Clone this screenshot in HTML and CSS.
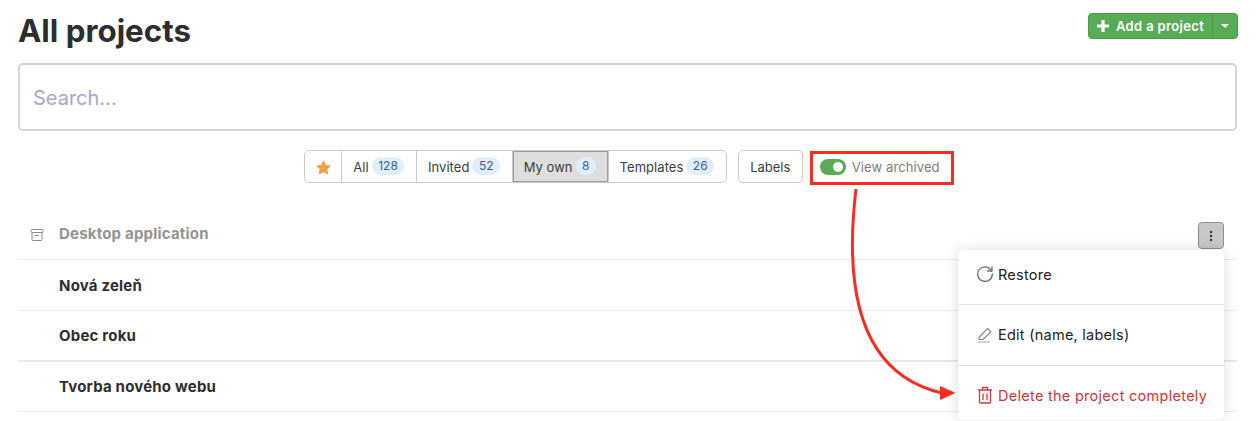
FILE: index.html
```html
<!DOCTYPE html>
<html lang="en">
<head>
<meta charset="utf-8">
<title>All projects</title>
<link rel="stylesheet" href="styles.css">
</head>
<body>
<main class="page">
  <header class="head">
    <h1 class="title">All projects</h1>
    <div class="add">
      <button class="add-main"><svg class="plus" viewBox="0 0 12 12" width="12" height="12"><path d="M4.400 0h3.200v4.400H12v3.200H7.600V12H4.400V7.600H0V4.400h4.400z" fill="#fff"/></svg>Add a project</button>
      <button class="add-caret"><span class="caret"></span></button>
    </div>
  </header>
  <div class="search">Search...</div>
  <nav class="filters">
    <div class="group">
      <button class="seg star"><svg viewBox="0 0 16 16" width="15" height="15"><path d="M8 1l2.200 4.600 5 .7-3.600 3.500.9 5L8 12.400l-4.500 2.400.9-5L.8 6.300l5-.7z" fill="#f0a044" stroke="#f0a044" stroke-linejoin="round"/></svg></button>
      <button class="seg">All <span class="badge">128</span></button>
      <button class="seg">Invited <span class="badge">52</span></button>
      <button class="seg active">My own <span class="badge">8</span></button>
      <button class="seg">Templates <span class="badge">26</span></button>
    </div>
    <button class="labels">Labels</button>
    <div class="toggle-box">
      <span class="toggle"><span class="knob"></span></span>
      <span class="toggle-text">View archived</span>
    </div>
  </nav>
  <section class="list">
    <div class="row archived">
      <svg class="archive" viewBox="0 0 14 14" width="14" height="14" fill="none" stroke="#8a8a8a" stroke-width="1"><rect x="1" y="1.500" width="12" height="3" rx=".8"/><path d="M2 4.500V11.500a1 1 0 0 0 1 1h8a1 1 0 0 0 1-1V4.500M5 7.500h4"/></svg>
      <span class="name">Desktop application</span>
      <button class="dots"><svg viewBox="0 0 4 12" width="4" height="12"><circle cx="2" cy="2" r="1.200" fill="#333"/><circle cx="2" cy="6" r="1.200" fill="#333"/><circle cx="2" cy="10" r="1.200" fill="#333"/></svg></button>
    </div>
    <div class="row"><span class="name">Nová zeleň</span></div>
    <div class="row thick"><span class="name">Obec roku</span></div>
    <div class="row last"><span class="name">Tvorba nového webu</span></div>
  </section>
</main>
<div class="menu">
  <div class="item first">
    <svg viewBox="0 0 18 18" width="18" height="18" fill="none" stroke="#6f6f6f" stroke-width="1.300" stroke-linecap="round" stroke-linejoin="round"><path d="M15.600 6A7.300 7.300 0 1 0 16.300 9"/><path d="M16 1.600V6h-4.400"/></svg>
    <span>Restore</span>
  </div>
  <div class="item edit">
    <svg viewBox="0 0 16 16" width="16" height="16" fill="none" stroke="#8a8a8a" stroke-width="1.100" stroke-linejoin="round"><path d="M3 10.500 11.500 1.500l3.500 3-8 8H3z"/><path d="M2 15h12" stroke="#b5b5b5" stroke-width="1.200"/></svg>
    <span>Edit (name, labels)</span>
  </div>
  <div class="item danger">
    <svg viewBox="0 0 16 18" width="16" height="18" fill="none" stroke="#cc3a3f" stroke-width="1.300" stroke-linejoin="round"><path d="M1 4h14M5.500 4V1.500h5V4M2.500 4v12a1 1 0 0 0 1 1h9a1 1 0 0 0 1-1V4M6 7.500v6.500M10 7.500v6.500"/></svg>
    <span>Delete the project completely</span>
  </div>
</div>
<div class="redbox"></div>
<svg class="arrow" viewBox="0 0 120 220" width="120" height="220" fill="none">
  <path d="M6 0C0 50-12 180 92 204" stroke="#f92c20" stroke-width="3"/>
  <path d="M90 197l15.500 7-15.500 7z" fill="#f92c20"/>
</svg>
</body>
</html>
```
FILE: styles.css
```css
* { box-sizing: border-box; }
html, body { margin: 0; height: 421px; overflow: hidden; background: #fff; }
body { font-family: Inter, "Liberation Sans", sans-serif; color: #2b2b2b; position: relative; }
button { font: inherit; color: inherit; background: none; padding: 0; margin: 0; cursor: pointer; }
.page { padding: 13px 22px 0 18px; }
.head { display: flex; justify-content: space-between; align-items: flex-start; height: 50px; }
.title { margin: 0; font-size: 31.300px; line-height: 36px; font-weight: 700; color: #2d2d2d; }
.add { display: flex; height: 26px; margin-right: -1px; border: 1px solid #469a46; border-radius: 4px; background: #5aab57; color: #fff; overflow: hidden; }
.add-main { display: flex; align-items: center; gap: 7px; border: 0; border-right: 1px solid #469a46; width: 124px; padding-left: 8px; font-size: 13px; font-weight: 600; color: #fff; letter-spacing: .35px; }
.add-caret { border: 0; width: 24px; display: flex; align-items: center; justify-content: center; }
.caret { border-left: 4px solid transparent; border-right: 4px solid transparent; border-top: 4px solid #fff; }
.search { height: 68px; border: 2px solid #d4d4d4; border-radius: 5px; padding: 2px 0 0 13px; display: flex; align-items: center; font-size: 20px; color: #a6a6c6; }
.filters { display: flex; justify-content: center; align-items: flex-start; margin-top: 19px; height: 57px; font-size: 13px; color: #3c3c3c; }
.group { display: flex; height: 33px; border: 1px solid #c9c9c9; border-radius: 5px; overflow: hidden; }
.seg { border: 0; border-right: 1px solid #c9c9c9; padding: 0 11.500px 0 11px; display: flex; align-items: center; gap: 3px; letter-spacing: .05px; }
.seg:last-child { border-right: 0; }
.star { width: 37px; padding: 2px 0 0; justify-content: center; }
.active { background: #dedede; box-shadow: inset 0 0 0 1px #9c9c9c; }
.badge { background: #e1eefa; color: #34609c; border-radius: 9px; font-size: 12px; line-height: 18px; padding: 0 6.500px; margin-top: -2px; }
.labels { margin-left: 11px; height: 33px; width: 65px; border: 1px solid #c9c9c9; border-radius: 5px; }
.toggle-box { margin-left: 17px; height: 33px; display: flex; align-items: center; gap: 6px; width: 131px; color: #7d7d7d; letter-spacing: .1px; }
.toggle { width: 26px; height: 16px; border-radius: 8px; background: #5aab57; position: relative; }
.knob { position: absolute; right: 3px; top: 3px; width: 10px; height: 10px; border-radius: 50%; background: #fff; }
.list { margin-top: 3px; }
.row { display: flex; align-items: center; height: 51px; border-bottom: 1px solid #ebebeb; padding-left: 41px; position: relative; font-size: 15px; font-weight: 700; color: #2e2e2e; letter-spacing: .2px; }
.row.thick { border-bottom: 2px solid #e8e8e8; }
.row.last { height: 50px; }
.archived { color: #939393; height: 50px; padding-bottom: 2px; }
.archive { position: absolute; left: 12px; top: 18px; }
.dots { position: absolute; right: 13px; top: 12px; width: 26px; height: 27px; border: 1px solid #8e8e8e; border-radius: 4px; background: #c8c8c8; display: flex; align-items: center; justify-content: center; }
.menu { position: absolute; left: 958px; top: 250px; width: 266px; height: 170px; background: #fff; border-radius: 5px; box-shadow: 0 0 14px rgba(0,0,0,.14); font-size: 14.500px; color: #222; }
.item { height: 61px; display: flex; align-items: center; gap: 5px; padding-left: 18px; border-top: 1px solid #e3e3e3; letter-spacing: .25px; }
.item.first { height: 54px; border-top: 0; padding-bottom: 6px; gap: 4px; }
.item.edit { padding-bottom: 1px; gap: 6px; }
.item.danger { height: 55px; color: #c9373d; letter-spacing: .28px; padding-top: 4px; padding-left: 19px; }
.item svg { flex: none; }
.redbox { position: absolute; left: 810px; top: 151px; width: 144px; height: 34px; border: 3px solid #f92c20; }
.arrow { position: absolute; left: 850px; top: 189px; }
```
